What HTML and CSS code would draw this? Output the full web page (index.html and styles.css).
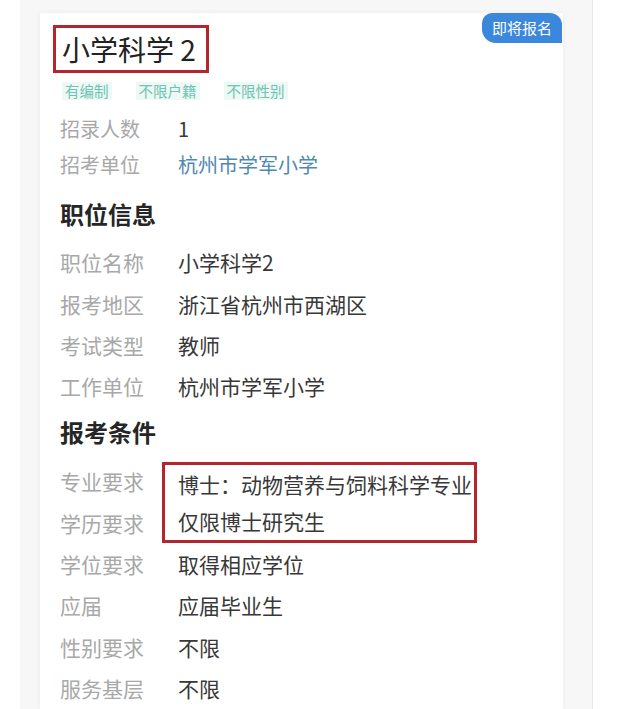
FILE: index.html
```html
<!DOCTYPE html>
<html lang="zh-CN">
  <head>
    <meta charset="UTF-8" />
    <meta name="viewport" content="width=device-width, initial-scale=1.0" />
    <title>职位详情</title>
    <link rel="stylesheet" href="styles.css">
  </head>
  <body>
    <div class="frame">
      <article class="card">
        <span class="badge">即将报名</span>

        <h1 class="title"><span class="mark">小学科学 2</span></h1>

        <div class="tags">
          <span class="tag">有编制</span>
          <span class="tag">不限户籍</span>
          <span class="tag">不限性别</span>
        </div>

        <div class="info info-top">
          <span class="label">招录人数</span>
          <span class="value">1</span>
          <span class="label">招考单位</span>
          <span class="value link">杭州市学军小学</span>
        </div>

        <h2 class="section">职位信息</h2>
        <div class="info">
          <span class="label">职位名称</span>
          <span class="value">小学科学2</span>
          <span class="label">报考地区</span>
          <span class="value">浙江省杭州市西湖区</span>
          <span class="label">考试类型</span>
          <span class="value">教师</span>
          <span class="label">工作单位</span>
          <span class="value">杭州市学军小学</span>
        </div>

        <h2 class="section section-cond">报考条件</h2>
        <div class="info">
          <span class="label">专业要求</span>
          <div class="highlight">
            <span class="value">博士：动物营养与饲料科学专业</span>
            <span class="value">仅限博士研究生</span>
          </div>
          <span class="label">学历要求</span>
          <span class="label">学位要求</span>
          <span class="value">取得相应学位</span>
          <span class="label">应届</span>
          <span class="value">应届毕业生</span>
          <span class="label">性别要求</span>
          <span class="value">不限</span>
          <span class="label">服务基层</span>
          <span class="value">不限</span>
        </div>
      </article>
    </div>
  </body>
</html>
```

FILE: styles.css
```css
body {
  margin: 0;
  background-color: #ffffff;
  font-family: "Noto Sans CJK SC", "Noto Sans", sans-serif;
}

.frame {
  box-sizing: border-box;
  width: 573px;
  min-height: 100vh;
  margin-left: 20px;
  padding: 13px 29px 0 20px;
  background-color: #f7f7f7;
  border-right: 1px solid #e8e8e8;
}

.card {
  position: relative;
  box-sizing: border-box;
  min-height: 696px;
  padding: 12px 0 0 20px;
  background-color: #ffffff;
  box-shadow: 0 0 6px rgba(0, 0, 0, 0.05);
}

.badge {
  position: absolute;
  top: 0;
  right: 1px;
  width: 80px;
  height: 30px;
  line-height: 30px;
  text-align: center;
  font-size: 15px;
  color: #ffffff;
  background-color: #3b87db;
  border-radius: 10px 12px 0 14px;
}

.title {
  display: flex;
  margin: 0;
  font-size: 28px;
  font-weight: 400;
  line-height: 42px;
  color: #222222;
}

.mark {
  margin-left: -7px;
  padding: 0 10px 0 6px;
  border: 3px solid #b3262d;
}

.tags {
  display: flex;
  gap: 24px;
  margin-top: 9px;
  margin-left: 2px;
}

.tag {
  padding: 0 3px;
  height: 18px;
  line-height: 18px;
  font-size: 14.5px;
  color: #6cc4b2;
  background-color: #eef8f5;
}

.info {
  display: grid;
  grid-template-columns: 118px 1fr;
  grid-auto-rows: 41.4px;
  align-items: center;
  font-size: 21px;
}

.info-top {
  margin-top: 10px;
  grid-auto-rows: 36px;
  font-size: 20px;
}

.label {
  color: #a8a8a8;
}

.value {
  color: #383838;
}

.link {
  color: #5088b0;
}

.section {
  margin: 0 0 9.5px 0;
  padding-top: 14px;
  font-size: 24px;
  font-weight: 700;
  line-height: 36px;
  color: #262626;
}

.section-cond {
  padding-top: 7px;
  margin-bottom: 10.5px;
}

.highlight {
  grid-row: span 2;
  align-self: stretch;
  display: flex;
  flex-direction: column;
  justify-content: space-around;
  box-sizing: border-box;
  width: 315px;
  margin: 1px 0 0 -16px;
  padding-left: 13px;
  border: 3px solid #b3262d;
}
```
